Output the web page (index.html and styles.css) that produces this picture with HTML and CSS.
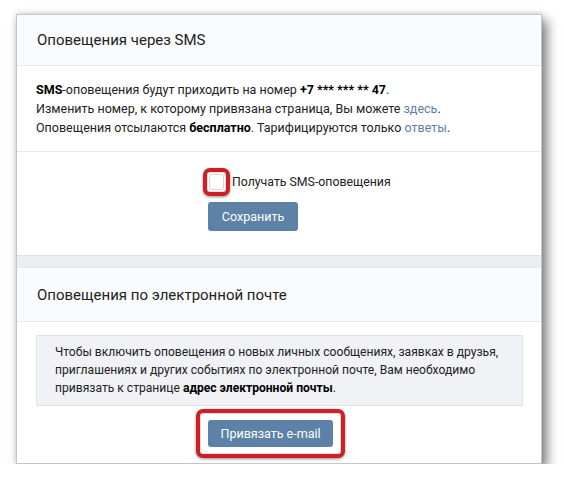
FILE: index.html
```html
<!DOCTYPE html>
<html lang="ru">
<head>
<meta charset="utf-8">
<link rel="stylesheet" href="styles.css">
</head>
<body>
<div class="frame">
  <div class="block-head">Оповещения через SMS</div>
  <div class="sms-info">
    <div><b>SMS</b>-оповещения будут приходить на номер <b>+7 *** *** ** 47</b>.</div>
    <div>Изменить номер, к которому привязана страница, Вы можете <a class="link">здесь</a>.</div>
    <div>Оповещения отсылаются <b>бесплатно</b>. Тарифицируются только <a class="link">ответы</a>.</div>
  </div>
  <div class="sms-form">
    <div class="check-row">
      <span class="ring ring-check"><span class="checkbox"></span></span>
      <span class="check-label">Получать SMS-оповещения</span>
    </div>
    <button class="btn btn-save">Сохранить</button>
  </div>
  <div class="band"></div>
  <div class="block-head block-head2">Оповещения по электронной почте</div>
  <div class="mail-body">
    <div class="info-box">
      <div>Чтобы включить оповещения о новых личных сообщениях, заявках в друзья,</div>
      <div>приглашениях и других событиях по электронной почте, Вам необходимо</div>
      <div>привязать к странице <b>адрес электронной почты</b>.</div>
    </div>
    <div class="mail-action">
      <span class="ring ring-btn"><button class="btn btn-mail">Привязать e-mail</button></span>
    </div>
  </div>
</div>
</body>
</html>
```

FILE: styles.css
```css
* { box-sizing: border-box; }
html, body { margin: 0; padding: 0; background: #fff; }
body {
  font-family: Roboto, "Noto Sans", "Liberation Sans", sans-serif;
  font-size: 12.5px;
  color: #222;
}
.frame {
  margin: 14px 0 0 16px;
  width: 526px;
  height: 450px;
  border: 1px solid #c4c6c9;
  background: #fff;
  box-shadow: 5px 6px 11px rgba(0,0,0,0.5), 0 -1px 5px rgba(0,0,0,0.12);
  overflow: hidden;
}
.block-head {
  height: 51px;
  padding: 0 20px;
  display: flex;
  align-items: center;
  font-size: 15px;
  color: #222;
  background: #fafbfc;
  border-bottom: 1px solid #e7e8ec;
}
.block-head2 { height: 54px; }
.sms-info {
  padding: 14px 19px 14px;
  line-height: 19px;
  border-bottom: 1px solid #e7e8ec;
}
.sms-info b, .info-box b { color: #000; font-weight: 700; }
.link { color: #5b7fa6; text-decoration: none; }
.sms-form {
  padding: 16px 0 24px 191px;
  display: flex;
  flex-direction: column;
  align-items: flex-start;
  gap: 6px;
}
.check-row {
  display: flex;
  align-items: center;
  margin-left: -5px;
  height: 28px;
}
.ring {
  display: inline-flex;
  border: 4px solid #cc1f26;
  border-radius: 7px;
  background: #fff;
  box-shadow: inset 0 0 0 1px #f4d9da, 0 1px 3px rgba(0,0,0,0.45);
}
.ring-check { padding: 2px; }
.checkbox {
  width: 15px;
  height: 16px;
  border: 1px solid #d3d6da;
  border-radius: 2px;
  background: #fff;
}
.check-label { margin-left: 2px; color: #222; font-size: 12.3px; }
.btn {
  border: 0;
  border-radius: 3px;
  background: #5e81a8;
  color: #fff;
  font-family: Roboto, "Noto Sans", "Liberation Sans", sans-serif;
  font-size: 12.5px;
  padding: 0;
  cursor: pointer;
}
.btn-save { width: 90px; height: 29px; }
.btn-mail { width: 125px; height: 27px; }
.band {
  height: 13px;
  background: #edeef0;
  border-top: 1px solid #e0e2e6;
  border-bottom: 1px solid #e7e8ec;
}
.mail-body {
  padding: 13px 18px 0 19px;
}
.info-box {
  background: #f0f2f5;
  border: 1px solid #dfe2e7;
  padding: 7px 18px 8px;
  line-height: 18px;
  font-size: 12.1px;
  color: #222;
  white-space: nowrap;
}
.mail-action {
  padding: 3px 0 0 160px;
}
.ring-btn { padding: 7px 8px; }
```
